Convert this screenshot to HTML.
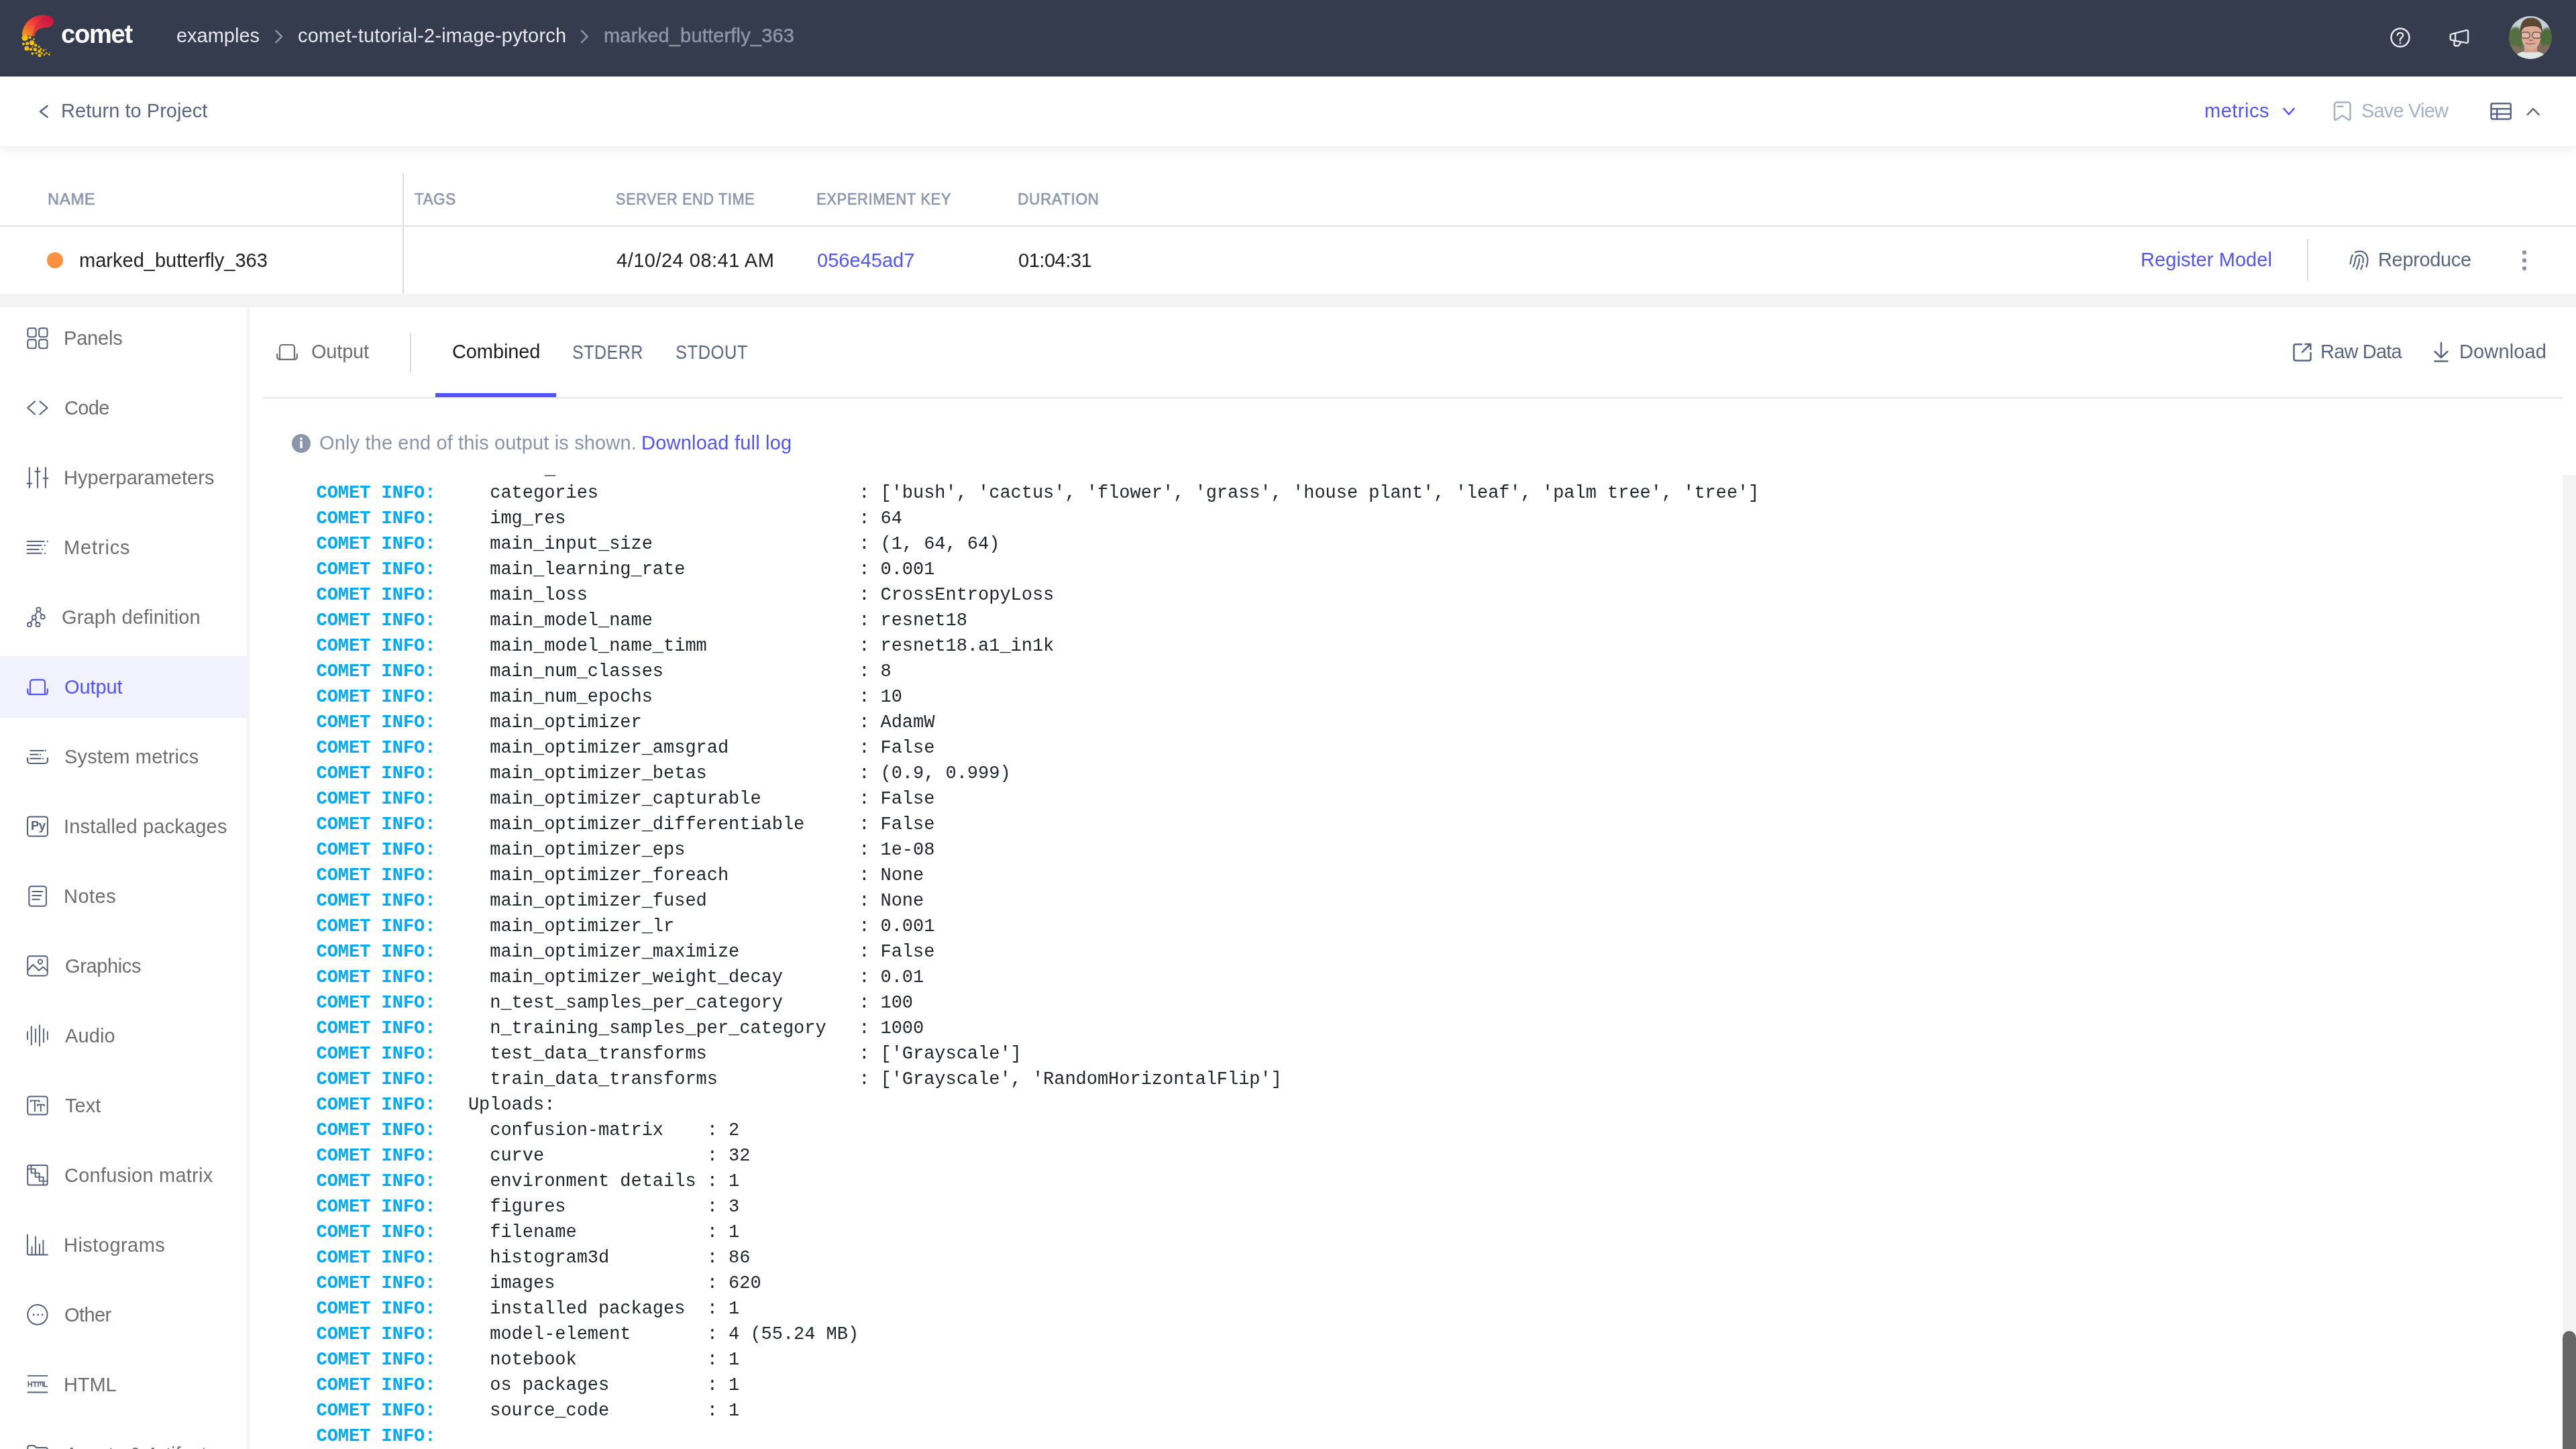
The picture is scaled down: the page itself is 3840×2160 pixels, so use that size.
<!DOCTYPE html><html><head><meta charset="utf-8"><style>*{margin:0;padding:0;box-sizing:border-box}
html,body{width:3840px;height:2160px;overflow:hidden;background:#fff;position:relative;font-family:"Liberation Sans",sans-serif}
.r{position:absolute}
.t{position:absolute;white-space:pre;font-family:"Liberation Sans",sans-serif;will-change:transform}
.log{position:absolute;left:372px;top:707.6px;width:3448px;height:1452.4px;overflow:hidden;background:#fff;will-change:transform}
.ln{position:absolute;left:99.5px;letter-spacing:-0.03px;white-space:pre;font-family:"Liberation Mono",monospace;font-size:27px;line-height:38px;color:#22252d}
.ln b{color:#03a9f4;font-weight:700}
@media (max-width:2600px){html{zoom:0.5}}
</style></head><body>
<div class="r" style="left:0;top:0;width:3840px;height:113px;background:#353c4e"></div>
<div class="r" style="left:0;top:112.5px;width:3840px;height:1.2px;background:#2b3143"></div>
<div class="r" style="left:0;top:114px;width:3840px;height:104px;background:#fff;box-shadow:0 4px 14px rgba(0,0,0,0.07)"></div>
<div class="r" style="left:0;top:438px;width:3840px;height:20px;background:#f3f3f3"></div>
<div class="r" style="left:600px;top:258px;width:2px;height:180px;background:#dcdcdc"></div>
<div class="r" style="left:0;top:336px;width:3840px;height:2px;background:#e2e2e2"></div>
<div class="r" style="left:3439px;top:356px;width:2px;height:63px;background:#d8dbe5"></div>
<div class="r" style="left:368px;top:458px;width:4px;height:1702px;background:#f3f3f3"></div>
<div class="r" style="left:0;top:978px;width:368px;height:92px;background:#f2f2fe"></div>
<div class="r" style="left:611px;top:495.5px;width:2px;height:59px;background:#dcdcdc"></div>
<div class="r" style="left:392px;top:592px;width:3428px;height:2px;background:#e3e3e3"></div>
<div class="r" style="left:648.75px;top:586px;width:180px;height:6px;background:#5155f5"></div>
<div class="log"><div class="ln" style="top:-29.78px"><b>COMET INFO:</b>     batch_size                       : 64</div>
<div class="ln" style="top:8.22px"><b>COMET INFO:</b>     categories                        : ['bush', 'cactus', 'flower', 'grass', 'house plant', 'leaf', 'palm tree', 'tree']</div>
<div class="ln" style="top:46.22px"><b>COMET INFO:</b>     img_res                           : 64</div>
<div class="ln" style="top:84.22px"><b>COMET INFO:</b>     main_input_size                   : (1, 64, 64)</div>
<div class="ln" style="top:122.22px"><b>COMET INFO:</b>     main_learning_rate                : 0.001</div>
<div class="ln" style="top:160.22px"><b>COMET INFO:</b>     main_loss                         : CrossEntropyLoss</div>
<div class="ln" style="top:198.22px"><b>COMET INFO:</b>     main_model_name                   : resnet18</div>
<div class="ln" style="top:236.22px"><b>COMET INFO:</b>     main_model_name_timm              : resnet18.a1_in1k</div>
<div class="ln" style="top:274.22px"><b>COMET INFO:</b>     main_num_classes                  : 8</div>
<div class="ln" style="top:312.22px"><b>COMET INFO:</b>     main_num_epochs                   : 10</div>
<div class="ln" style="top:350.22px"><b>COMET INFO:</b>     main_optimizer                    : AdamW</div>
<div class="ln" style="top:388.22px"><b>COMET INFO:</b>     main_optimizer_amsgrad            : False</div>
<div class="ln" style="top:426.22px"><b>COMET INFO:</b>     main_optimizer_betas              : (0.9, 0.999)</div>
<div class="ln" style="top:464.22px"><b>COMET INFO:</b>     main_optimizer_capturable         : False</div>
<div class="ln" style="top:502.22px"><b>COMET INFO:</b>     main_optimizer_differentiable     : False</div>
<div class="ln" style="top:540.22px"><b>COMET INFO:</b>     main_optimizer_eps                : 1e-08</div>
<div class="ln" style="top:578.22px"><b>COMET INFO:</b>     main_optimizer_foreach            : None</div>
<div class="ln" style="top:616.22px"><b>COMET INFO:</b>     main_optimizer_fused              : None</div>
<div class="ln" style="top:654.22px"><b>COMET INFO:</b>     main_optimizer_lr                 : 0.001</div>
<div class="ln" style="top:692.22px"><b>COMET INFO:</b>     main_optimizer_maximize           : False</div>
<div class="ln" style="top:730.22px"><b>COMET INFO:</b>     main_optimizer_weight_decay       : 0.01</div>
<div class="ln" style="top:768.22px"><b>COMET INFO:</b>     n_test_samples_per_category       : 100</div>
<div class="ln" style="top:806.22px"><b>COMET INFO:</b>     n_training_samples_per_category   : 1000</div>
<div class="ln" style="top:844.22px"><b>COMET INFO:</b>     test_data_transforms              : ['Grayscale']</div>
<div class="ln" style="top:882.22px"><b>COMET INFO:</b>     train_data_transforms             : ['Grayscale', 'RandomHorizontalFlip']</div>
<div class="ln" style="top:920.22px"><b>COMET INFO:</b>   Uploads:</div>
<div class="ln" style="top:958.22px"><b>COMET INFO:</b>     confusion-matrix    : 2</div>
<div class="ln" style="top:996.22px"><b>COMET INFO:</b>     curve               : 32</div>
<div class="ln" style="top:1034.22px"><b>COMET INFO:</b>     environment details : 1</div>
<div class="ln" style="top:1072.22px"><b>COMET INFO:</b>     figures             : 3</div>
<div class="ln" style="top:1110.22px"><b>COMET INFO:</b>     filename            : 1</div>
<div class="ln" style="top:1148.22px"><b>COMET INFO:</b>     histogram3d         : 86</div>
<div class="ln" style="top:1186.22px"><b>COMET INFO:</b>     images              : 620</div>
<div class="ln" style="top:1224.22px"><b>COMET INFO:</b>     installed packages  : 1</div>
<div class="ln" style="top:1262.22px"><b>COMET INFO:</b>     model-element       : 4 (55.24 MB)</div>
<div class="ln" style="top:1300.22px"><b>COMET INFO:</b>     notebook            : 1</div>
<div class="ln" style="top:1338.22px"><b>COMET INFO:</b>     os packages         : 1</div>
<div class="ln" style="top:1376.22px"><b>COMET INFO:</b>     source_code         : 1</div>
<div class="ln" style="top:1414.22px"><b>COMET INFO:</b></div><div class="r" style="left:440px;top:0.4px;width:15.5px;height:1.2px;background:#777"></div></div>
<div class="r" style="left:3820px;top:707.6px;width:20px;height:1452.4px;background:#f3f3f3"></div>
<div class="r" style="left:3820px;top:1984px;width:20px;height:200px;border-radius:10px;background:#666"></div>
<svg width="3840" height="2160" style="position:absolute;left:0;top:0"><defs><linearGradient id="lg" x1="0" y1="1" x2="1" y2="0"><stop offset="0" stop-color="#f6a11f"/><stop offset="0.5" stop-color="#ef3f3d"/><stop offset="1" stop-color="#c40f47"/></linearGradient><linearGradient id="dg" x1="0" y1="0" x2="0" y2="1"><stop offset="0" stop-color="#f0a91f"/><stop offset="1" stop-color="#ffd000"/></linearGradient></defs><path d="M33 52.5 C33.5 36 46 23 63 22.5 C72 22.2 80 25.5 80 31.5 C80 37.5 74.5 41 68.5 41 C58.5 41 51.5 46.5 51.5 54 Z" fill="url(#lg)"/><path d="M71.5 23.2 C76.5 24.5 80 27.5 80 31.5 C80 37.5 74.5 41 68.5 41 C58.5 41 51.5 46.5 51.5 54 L48 53.8 C49 40 58 28 71.5 23.2 Z" fill="#c5143f" opacity="0.45"/><circle cx="37.2" cy="56.3" r="4.7" fill="url(#dg)"/><circle cx="44.6" cy="55.8" r="2.1" fill="url(#dg)"/><circle cx="50.4" cy="58.2" r="1.3" fill="url(#dg)"/><circle cx="35" cy="65.4" r="2.0" fill="url(#dg)"/><circle cx="40.7" cy="64.7" r="2.5" fill="url(#dg)"/><circle cx="47.6" cy="63.7" r="3.7" fill="url(#dg)"/><circle cx="53.1" cy="67.4" r="2.2" fill="url(#dg)"/><circle cx="58.1" cy="69.7" r="1.6" fill="url(#dg)"/><circle cx="39.9" cy="72.1" r="3.5" fill="url(#dg)"/><circle cx="45.9" cy="73.4" r="2.2" fill="url(#dg)"/><circle cx="52.3" cy="73.6" r="2.7" fill="url(#dg)"/><circle cx="48.4" cy="69.9" r="1.1" fill="url(#dg)"/><circle cx="61" cy="73.1" r="1.6" fill="url(#dg)"/><circle cx="65" cy="75.1" r="1.5" fill="url(#dg)"/><circle cx="68.2" cy="73.6" r="0.8" fill="url(#dg)"/><circle cx="58.6" cy="76.4" r="2.4" fill="url(#dg)"/><circle cx="48.4" cy="79.8" r="1.9" fill="url(#dg)"/><circle cx="54.3" cy="79.1" r="1.7" fill="url(#dg)"/><circle cx="62.3" cy="79.1" r="1.7" fill="url(#dg)"/><circle cx="59" cy="82.6" r="2.5" fill="url(#dg)"/><circle cx="66" cy="81.6" r="1.4" fill="url(#dg)"/><circle cx="69.2" cy="79.1" r="1.5" fill="url(#dg)"/><circle cx="73.2" cy="81.3" r="1.4" fill="url(#dg)"/><circle cx="74.4" cy="78.4" r="0.75" fill="url(#dg)"/><defs><clipPath id="av"><circle cx="3772" cy="56" r="32"/></clipPath><filter id="bl" x="-10%" y="-10%" width="120%" height="120%"><feGaussianBlur stdDeviation="1.6"/></filter><filter id="bl2"><feGaussianBlur stdDeviation="0.7"/></filter></defs><g clip-path="url(#av)"><g filter="url(#bl)"><rect x="3736" y="20" width="72" height="72" fill="#7c7262"/><rect x="3736" y="20" width="72" height="26" fill="#c6d0d6"/><ellipse cx="3750" cy="58" rx="13" ry="18" fill="#55703f"/><ellipse cx="3797" cy="57" rx="11" ry="16" fill="#4f6d3a"/><ellipse cx="3748" cy="78" rx="14" ry="10" fill="#7d6f5c"/><ellipse cx="3796" cy="76" rx="12" ry="9" fill="#806a60"/></g><g filter="url(#bl2)"><path d="M3744 92 C3748 80 3758 76 3772 76 C3786 76 3796 80 3800 92 Z" fill="#dde9e2"/><rect x="3763" y="66" width="19" height="12" fill="#d3a08e"/><path d="M3758 46 C3758 36 3764 33 3773 33 C3782 33 3788 37 3788 46 C3788 62 3784 74 3773 74 C3762 74 3758 62 3758 46 Z" fill="#dcab97"/><path d="M3757.5 51 C3755.5 37 3760 27 3772 26.5 C3784 26 3791 34 3789.5 49 C3788.5 45 3787 42 3783 40 C3777 38.5 3766 38.5 3761.5 42 C3759.5 44.5 3758.5 48 3757.5 51 Z" fill="#5a4636"/><rect x="3758.5" y="48" width="12.5" height="9" rx="3.5" fill="#e2b8a8" stroke="#6b5446" stroke-width="1.4"/><rect x="3775" y="48" width="12.5" height="9" rx="3.5" fill="#e2b8a8" stroke="#6b5446" stroke-width="1.4"/><path d="M3770.5 59 C3771.5 61 3774 61 3775.5 59" stroke="#8a5a4a" stroke-width="1.3" fill="none"/><path d="M3765 64.5 Q3772 66.5 3779 64.5" stroke="#a0685a" stroke-width="1.6" fill="none"/></g></g><circle cx="3578" cy="56" r="13.5" fill="none" stroke="#e4e7ee" stroke-width="2.5"/><path d="M3573.8 52.3 C3574.3 50 3575.9 48.9 3578 48.9 C3580.5 48.9 3582.2 50.5 3582.2 52.6 C3582.2 54.6 3580.8 55.5 3579.5 56.5 C3578.3 57.4 3577.8 58.3 3577.8 60.3" fill="none" stroke="#e4e7ee" stroke-width="2.4" stroke-linecap="round" stroke-linejoin="round" /><circle cx="3578" cy="64.2" r="1.4" fill="#e4e7ee"/><path d="M3655.2 50.6 L3676.6 45.1 a2 2 0 0 1 2.5 1.9 V62 a2 2 0 0 1 -2.5 1.9 L3655.2 59.9 a2.5 2.5 0 0 1 -2.5 -2.4 V53 a2.5 2.5 0 0 1 2.5 -2.4 Z" fill="none" stroke="#e4e7ee" stroke-width="2.4" stroke-linecap="round" stroke-linejoin="round" /><path d="M3660.1 50 V60.5" fill="none" stroke="#e4e7ee" stroke-width="2.4" stroke-linecap="round" stroke-linejoin="round" /><path d="M3658.5 60.8 V66 a2.2 2.2 0 0 0 2.2 2.2 H3663.8 a2 2 0 0 0 1.7 -0.9 L3668 63.4" fill="none" stroke="#e4e7ee" stroke-width="2.4" stroke-linecap="round" stroke-linejoin="round" /><path d="M411.5 45.8 L420 54.5 L411.5 63.2" fill="none" stroke="#8a91a5" stroke-width="2.6" stroke-linecap="round" stroke-linejoin="round" /><path d="M867 45.8 L875.5 54.5 L867 63.2" fill="none" stroke="#8a91a5" stroke-width="2.6" stroke-linecap="round" stroke-linejoin="round" /><path d="M70.5 158 L60 166.2 L70.5 174.4" fill="none" stroke="#5a6580" stroke-width="2.6" stroke-linecap="round" stroke-linejoin="round" /><path d="M3404.5 162 L3412 170.5 L3419.5 162" fill="none" stroke="#5155f5" stroke-width="2.6" stroke-linecap="round" stroke-linejoin="round" /><path d="M3480 156 a3.5 3.5 0 0 1 3.5 -3.5 H3500 a3.5 3.5 0 0 1 3.5 3.5 V177.3 a1.5 1.5 0 0 1 -2.4 1.2 L3491.7 172.2 L3482.4 178.5 a1.5 1.5 0 0 1 -2.4 -1.2 Z" fill="none" stroke="#a9b0c3" stroke-width="2.5" stroke-linecap="round" stroke-linejoin="round" /><path d="M3484.5 158.8 H3492.5" fill="none" stroke="#a9b0c3" stroke-width="2.5" stroke-linecap="round" stroke-linejoin="round" /><rect x="3713.5" y="154.3" width="29.3" height="23.3" rx="2.5" fill="none" stroke="#5a6580" stroke-width="2.5"/><path d="M3713.5 162.2 H3742.8 M3713.5 170 H3742.8 M3722.2 162.2 V177.6" fill="none" stroke="#5a6580" stroke-width="2.5" stroke-linecap="round" stroke-linejoin="round" /><path d="M3767.8 170.8 L3776.2 162.2 L3784.6 170.8" fill="none" stroke="#6b6b6b" stroke-width="2.6" stroke-linecap="round" stroke-linejoin="round" /><circle cx="82" cy="388" r="12" fill="#fa923f"/><path d="M3510.9 376 C3513.5 375 3516 374.6 3518.1 374.6 C3524.5 374.6 3529.4 380 3529.4 387.3 C3529.4 391 3528.6 394.5 3527.5 397.5" fill="none" stroke="#5a6580" stroke-width="2.2" stroke-linecap="round" stroke-linejoin="round" /><path d="M3506.8 380.2 C3505.3 383 3504.6 386 3504.3 389.5 C3504.1 391 3503.8 392.2 3503.5 393.1" fill="none" stroke="#5a6580" stroke-width="2.2" stroke-linecap="round" stroke-linejoin="round" /><path d="M3507.9 397.5 C3509.6 394.5 3510.6 391 3511 386.5 C3511.3 383 3513.5 380.7 3517 380.7 C3520.6 380.7 3522.8 383.3 3522.8 386.5 C3522.8 388.5 3522.6 390 3522.5 391.5" fill="none" stroke="#5a6580" stroke-width="2.2" stroke-linecap="round" stroke-linejoin="round" /><path d="M3517.1 386 C3517 389.5 3516.4 392.5 3515.3 395.3 C3514.6 397.2 3513.7 399.2 3512.8 400.9" fill="none" stroke="#5a6580" stroke-width="2.2" stroke-linecap="round" stroke-linejoin="round" /><path d="M3521.7 395.3 L3519.5 401.4" fill="none" stroke="#5a6580" stroke-width="2.2" stroke-linecap="round" stroke-linejoin="round" /><circle cx="3763" cy="376.3" r="3.1" fill="#8a91a5"/><circle cx="3763" cy="388.2" r="3.1" fill="#8a91a5"/><circle cx="3763" cy="400.1" r="3.1" fill="#8a91a5"/><rect x="41.3" y="489.2" width="12.4" height="13" rx="3" fill="none" stroke="#55607c" stroke-width="2"/><rect x="58.2" y="489.2" width="12.4" height="13" rx="3" fill="none" stroke="#55607c" stroke-width="2"/><rect x="41.3" y="506.2" width="12.4" height="13" rx="3" fill="none" stroke="#55607c" stroke-width="2"/><rect x="58.2" y="506.2" width="12.4" height="13" rx="3" fill="none" stroke="#55607c" stroke-width="2"/><path d="M52 598.5 L41.2 608 L52 617.5" fill="none" stroke="#55607c" stroke-width="2.2" stroke-linecap="round" stroke-linejoin="round" /><path d="M59.6 598.5 L70.6 608 L59.6 617.5" fill="none" stroke="#55607c" stroke-width="2.2" stroke-linecap="round" stroke-linejoin="round" /><path d="M43.8 697 V727" fill="none" stroke="#55607c" stroke-width="2" stroke-linecap="round" stroke-linejoin="round" /><path d="M56 697 V727" fill="none" stroke="#55607c" stroke-width="2" stroke-linecap="round" stroke-linejoin="round" /><path d="M68 697 V727" fill="none" stroke="#55607c" stroke-width="2" stroke-linecap="round" stroke-linejoin="round" /><path d="M40.3 720.8 H47.3" fill="none" stroke="#55607c" stroke-width="2" stroke-linecap="round" stroke-linejoin="round" /><path d="M52.5 702.9 H59.5" fill="none" stroke="#55607c" stroke-width="2" stroke-linecap="round" stroke-linejoin="round" /><path d="M64.5 713 H71.5" fill="none" stroke="#55607c" stroke-width="2" stroke-linecap="round" stroke-linejoin="round" /><path d="M40.5 806.9 H65.7" fill="none" stroke="#55607c" stroke-width="2" stroke-linecap="round" stroke-linejoin="round" /><rect x="69.9" y="805.9" width="2" height="2" fill="#55607c"/><path d="M40.5 812.9 H61.8" fill="none" stroke="#55607c" stroke-width="2" stroke-linecap="round" stroke-linejoin="round" /><rect x="65.9" y="811.9" width="2" height="2" fill="#55607c"/><path d="M40.5 818.9 H57.8" fill="none" stroke="#55607c" stroke-width="2" stroke-linecap="round" stroke-linejoin="round" /><rect x="62" y="817.9" width="2" height="2" fill="#55607c"/><path d="M40.5 824.8 H61.8" fill="none" stroke="#55607c" stroke-width="2" stroke-linecap="round" stroke-linejoin="round" /><rect x="65.9" y="823.8" width="2" height="2" fill="#55607c"/><circle cx="57.4" cy="908.7" r="3.1" fill="none" stroke="#55607c" stroke-width="1.8"/><circle cx="63.7" cy="919.5" r="3.1" fill="none" stroke="#55607c" stroke-width="1.8"/><circle cx="50.8" cy="920.4" r="3.1" fill="none" stroke="#55607c" stroke-width="1.8"/><circle cx="44" cy="931.1" r="3.1" fill="none" stroke="#55607c" stroke-width="1.8"/><circle cx="56.5" cy="931.1" r="3.1" fill="none" stroke="#55607c" stroke-width="1.8"/><path d="M58.9 911.4 L62.2 916.8" fill="none" stroke="#55607c" stroke-width="1.8" stroke-linecap="round" stroke-linejoin="round" /><path d="M55.9 911.4 L52.3 917.7" fill="none" stroke="#55607c" stroke-width="1.8" stroke-linecap="round" stroke-linejoin="round" /><path d="M49.3 923.1 L45.5 928.4" fill="none" stroke="#55607c" stroke-width="1.8" stroke-linecap="round" stroke-linejoin="round" /><path d="M52.3 923.1 L55 928.4" fill="none" stroke="#55607c" stroke-width="1.8" stroke-linecap="round" stroke-linejoin="round" /><g transform="translate(40 1012.4)"><path d="M1.2 15 V19.3 a3.5 3.5 0 0 0 3.5 3.5 H27.3 a3.5 3.5 0 0 0 3.5 -3.5 V15" fill="none" stroke="#5155f5" stroke-width="2.2" stroke-linecap="round" stroke-linejoin="round" /><path d="M5 22.5 V5 a4 4 0 0 1 4 -4 H23 a4 4 0 0 1 4 4 V22.5" fill="none" stroke="#5155f5" stroke-width="2.2" stroke-linecap="round" stroke-linejoin="round" /></g><path d="M45.2 1118.9 H65" fill="none" stroke="#55607c" stroke-width="2" stroke-linecap="round" stroke-linejoin="round" /><rect x="67" y="1117.9" width="2" height="2" fill="#55607c"/><path d="M45.2 1124.8 H56.6" fill="none" stroke="#55607c" stroke-width="2" stroke-linecap="round" stroke-linejoin="round" /><rect x="59" y="1123.8" width="2" height="2" fill="#55607c"/><path d="M45.2 1130.8 H60.6" fill="none" stroke="#55607c" stroke-width="2" stroke-linecap="round" stroke-linejoin="round" /><rect x="63" y="1129.8" width="2" height="2" fill="#55607c"/><path d="M41 1130 V1134 a4 4 0 0 0 4 4 H67 a4 4 0 0 0 4 -4 V1130" fill="none" stroke="#55607c" stroke-width="2.2" stroke-linecap="round" stroke-linejoin="round" /><rect x="41" y="1217.4" width="30" height="29" rx="3.5" fill="none" stroke="#55607c" stroke-width="2"/><text x="46" y="1237.3" font-family="Liberation Sans" font-weight="700" font-size="18.5" fill="#55607c" letter-spacing="-0.6">Py</text><rect x="43.3" y="1321.2" width="25.6" height="29.5" rx="3.5" fill="none" stroke="#55607c" stroke-width="2"/><path d="M48.3 1328.9 H63.5" fill="none" stroke="#55607c" stroke-width="2" stroke-linecap="round" stroke-linejoin="round" /><path d="M48.3 1334.9 H61.3" fill="none" stroke="#55607c" stroke-width="2" stroke-linecap="round" stroke-linejoin="round" /><path d="M48.3 1340.8 H58.8" fill="none" stroke="#55607c" stroke-width="2" stroke-linecap="round" stroke-linejoin="round" /><rect x="41.2" y="1425.2" width="29.5" height="29.2" rx="3.5" fill="none" stroke="#55607c" stroke-width="2"/><path d="M41.5 1446.5 L49.1 1438 L58.1 1446.8 L64.1 1441.6 L70.5 1447" fill="none" stroke="#55607c" stroke-width="2" stroke-linecap="round" stroke-linejoin="round" /><circle cx="60" cy="1433.6" r="3.2" fill="none" stroke="#55607c" stroke-width="1.9"/><path d="M40.9 1538.0 V1549.6" fill="none" stroke="#55607c" stroke-width="1.9" stroke-linecap="round" stroke-linejoin="round" /><path d="M46.8 1530.3 V1557.3" fill="none" stroke="#55607c" stroke-width="1.9" stroke-linecap="round" stroke-linejoin="round" /><path d="M53 1534.0 V1553.6" fill="none" stroke="#55607c" stroke-width="1.9" stroke-linecap="round" stroke-linejoin="round" /><path d="M59 1528.3 V1559.3" fill="none" stroke="#55607c" stroke-width="1.9" stroke-linecap="round" stroke-linejoin="round" /><path d="M65 1534.0 V1553.6" fill="none" stroke="#55607c" stroke-width="1.9" stroke-linecap="round" stroke-linejoin="round" /><path d="M70.9 1538.0 V1549.6" fill="none" stroke="#55607c" stroke-width="1.9" stroke-linecap="round" stroke-linejoin="round" /><rect x="41.2" y="1634.4" width="29.5" height="27.2" rx="3.5" fill="none" stroke="#55607c" stroke-width="2"/><path d="M45.6 1642.3 V1640.6 H58.5 V1642.3" fill="none" stroke="#55607c" stroke-width="1.9" stroke-linecap="round" stroke-linejoin="round" /><path d="M51.9 1640.6 V1656.2" fill="none" stroke="#55607c" stroke-width="1.9" stroke-linecap="round" stroke-linejoin="round" /><path d="M56 1648.3 V1646.7 H65.8 V1648.3" fill="none" stroke="#55607c" stroke-width="1.9" stroke-linecap="round" stroke-linejoin="round" /><path d="M60.8 1646.7 V1656.2" fill="none" stroke="#55607c" stroke-width="1.9" stroke-linecap="round" stroke-linejoin="round" /><rect x="41.2" y="1737.1" width="29.5" height="29.4" rx="2.5" fill="none" stroke="#55607c" stroke-width="2"/><path d="M41.2 1742.6 H52.6 V1754.6 H64.6 V1766.5" fill="none" stroke="#55607c" stroke-width="1.9" stroke-linecap="round" stroke-linejoin="round" /><path d="M46.6 1737.1 V1748.6 H58.6 V1760.6 H70.7" fill="none" stroke="#55607c" stroke-width="1.9" stroke-linecap="round" stroke-linejoin="round" /><path d="M40.9 1840.8 V1868.5 a2 2 0 0 0 2 2 H71" fill="none" stroke="#55607c" stroke-width="2" stroke-linecap="round" stroke-linejoin="round" /><path d="M47.6 1858.4 V1870" fill="none" stroke="#55607c" stroke-width="1.9" stroke-linecap="round" stroke-linejoin="round" /><path d="M53 1843.4 V1870" fill="none" stroke="#55607c" stroke-width="1.9" stroke-linecap="round" stroke-linejoin="round" /><path d="M59 1854.8 V1870" fill="none" stroke="#55607c" stroke-width="1.9" stroke-linecap="round" stroke-linejoin="round" /><path d="M64.4 1849 V1870" fill="none" stroke="#55607c" stroke-width="1.9" stroke-linecap="round" stroke-linejoin="round" /><circle cx="55.9" cy="1959.8" r="14.7" fill="none" stroke="#55607c" stroke-width="2"/><circle cx="50.2" cy="1960" r="1.4" fill="#55607c"/><circle cx="56.6" cy="1960" r="1.4" fill="#55607c"/><circle cx="63.2" cy="1960" r="1.4" fill="#55607c"/><path d="M41.6 2050.9 H70.6" fill="none" stroke="#55607c" stroke-width="1.9" stroke-linecap="round" stroke-linejoin="round" /><path d="M41.6 2075.5 H70.6" fill="none" stroke="#55607c" stroke-width="1.9" stroke-linecap="round" stroke-linejoin="round" /><path d="M42.3 2059.8 V2067 M42.3 2063.4 H47.3 M47.3 2059.8 V2067" fill="none" stroke="#55607c" stroke-width="1.6" stroke-linecap="round" stroke-linejoin="round" /><path d="M49.2 2060.4 H55.2 M52.2 2060.4 V2067" fill="none" stroke="#55607c" stroke-width="1.6" stroke-linecap="round" stroke-linejoin="round" /><path d="M57 2067 V2060.4 H64 V2067 M60.5 2060.4 V2065" fill="none" stroke="#55607c" stroke-width="1.6" stroke-linecap="round" stroke-linejoin="round" /><path d="M66 2059.8 V2066.8 H70.5" fill="none" stroke="#55607c" stroke-width="1.6" stroke-linecap="round" stroke-linejoin="round" /><path d="M41.2 2162 V2158 a3 3 0 0 1 3 -3 H51 L54 2158 H68 a3 3 0 0 1 3 3 V2162" fill="none" stroke="#55607c" stroke-width="2" stroke-linecap="round" stroke-linejoin="round" /><g transform="translate(412 513)"><path d="M1.2 15 V19.3 a3.5 3.5 0 0 0 3.5 3.5 H27.3 a3.5 3.5 0 0 0 3.5 -3.5 V15" fill="none" stroke="#6e6e6e" stroke-width="2.2" stroke-linecap="round" stroke-linejoin="round" /><path d="M5 22.5 V5 a4 4 0 0 1 4 -4 H23 a4 4 0 0 1 4 4 V22.5" fill="none" stroke="#6e6e6e" stroke-width="2.2" stroke-linecap="round" stroke-linejoin="round" /></g><path d="M3431 513.2 H3422 a2.5 2.5 0 0 0 -2.5 2.5 V535 a2.5 2.5 0 0 0 2.5 2.5 H3442 a2.5 2.5 0 0 0 2.5 -2.5 V526" fill="none" stroke="#5a6580" stroke-width="2.5" stroke-linecap="round" stroke-linejoin="round" /><path d="M3432 524.8 L3443.5 513.5 M3436.5 513 H3444.3 V520.8" fill="none" stroke="#5a6580" stroke-width="2.5" stroke-linecap="round" stroke-linejoin="round" /><path d="M3639 511 V533 M3629.6 524 L3639 533.2 L3648.4 524 M3629.5 538.5 H3648.5" fill="none" stroke="#5a6580" stroke-width="2.5" stroke-linecap="round" stroke-linejoin="round" /><circle cx="449" cy="661" r="14" fill="#8c95aa"/><circle cx="449" cy="654" r="1.9" fill="#fff"/><rect x="447.3" y="657.5" width="3.4" height="10.5" rx="0.6" fill="#fff"/></svg>
<div class="t" style="left:91.00px;top:32.33px;font-size:38px;line-height:38px;color:#ffffff;font-weight:700;letter-spacing:-1.192px;">comet</div>
<div class="t" style="left:262.80px;top:39.05px;font-size:29px;line-height:29px;color:#e4e7ee;font-weight:400;letter-spacing:-0.016px;">examples</div>
<div class="t" style="left:443.60px;top:39.05px;font-size:29px;line-height:29px;color:#e4e7ee;font-weight:400;letter-spacing:0.178px;">comet-tutorial-2-image-pytorch</div>
<div class="t" style="left:900.25px;top:39.05px;font-size:29px;line-height:29px;color:#8e95a8;font-weight:400;letter-spacing:0.178px;-webkit-text-stroke:0.5px #8e95a8;">marked_butterfly_363</div>
<div class="t" style="left:90.50px;top:151.15px;font-size:29px;line-height:29px;color:#5a6580;font-weight:400;letter-spacing:0.044px;">Return to Project</div>
<div class="t" style="left:3286.25px;top:150.65px;font-size:29px;line-height:29px;color:#5155f5;font-weight:400;letter-spacing:0.510px;">metrics</div>
<div class="t" style="left:3519.50px;top:150.65px;font-size:29px;line-height:29px;color:#a9b0c3;font-weight:400;letter-spacing:-0.818px;">Save View</div>
<div class="t" style="left:70.57px;top:284.96px;font-size:24.5px;line-height:24.5px;color:#8c96aa;font-weight:400;letter-spacing:0.800px;transform:scaleX(0.9669);transform-origin:0 0;-webkit-text-stroke:0.7px #8c96aa;">NAME</div>
<div class="t" style="left:618.00px;top:284.96px;font-size:24.5px;line-height:24.5px;color:#8c96aa;font-weight:400;letter-spacing:0.800px;transform:scaleX(0.9075);transform-origin:0 0;-webkit-text-stroke:0.7px #8c96aa;">TAGS</div>
<div class="t" style="left:917.87px;top:284.96px;font-size:24.5px;line-height:24.5px;color:#8c96aa;font-weight:400;letter-spacing:0.800px;transform:scaleX(0.8792);transform-origin:0 0;-webkit-text-stroke:0.7px #8c96aa;">SERVER END TIME</div>
<div class="t" style="left:1216.97px;top:284.96px;font-size:24.5px;line-height:24.5px;color:#8c96aa;font-weight:400;letter-spacing:0.800px;transform:scaleX(0.8906);transform-origin:0 0;-webkit-text-stroke:0.7px #8c96aa;">EXPERIMENT KEY</div>
<div class="t" style="left:1516.91px;top:284.96px;font-size:24.5px;line-height:24.5px;color:#8c96aa;font-weight:400;letter-spacing:0.800px;transform:scaleX(0.9177);transform-origin:0 0;-webkit-text-stroke:0.7px #8c96aa;">DURATION</div>
<div class="t" style="left:117.75px;top:373.65px;font-size:29px;line-height:29px;color:#222222;font-weight:400;letter-spacing:0.020px;">marked_butterfly_363</div>
<div class="t" style="left:918.75px;top:373.65px;font-size:29px;line-height:29px;color:#222222;font-weight:400;letter-spacing:0.498px;">4/10/24 08:41 AM</div>
<div class="t" style="left:1217.75px;top:373.65px;font-size:29px;line-height:29px;color:#5155f5;font-weight:400;letter-spacing:0.028px;">056e45ad7</div>
<div class="t" style="left:1517.75px;top:373.65px;font-size:29px;line-height:29px;color:#222222;font-weight:400;letter-spacing:-0.465px;">01:04:31</div>
<div class="t" style="left:3191.25px;top:373.15px;font-size:29px;line-height:29px;color:#5155f5;font-weight:400;letter-spacing:0.070px;">Register Model</div>
<div class="t" style="left:3544.50px;top:373.15px;font-size:29px;line-height:29px;color:#5a6580;font-weight:400;letter-spacing:-0.343px;">Reproduce</div>
<div class="t" style="left:94.80px;top:489.75px;font-size:29px;line-height:29px;color:#6e6e6e;font-weight:400;letter-spacing:-0.194px;">Panels</div>
<div class="t" style="left:95.80px;top:593.75px;font-size:29px;line-height:29px;color:#6e6e6e;font-weight:400;letter-spacing:-0.667px;">Code</div>
<div class="t" style="left:94.80px;top:697.75px;font-size:29px;line-height:29px;color:#6e6e6e;font-weight:400;letter-spacing:0.027px;">Hyperparameters</div>
<div class="t" style="left:94.80px;top:801.75px;font-size:29px;line-height:29px;color:#6e6e6e;font-weight:400;letter-spacing:0.860px;">Metrics</div>
<div class="t" style="left:92.40px;top:905.75px;font-size:29px;line-height:29px;color:#6e6e6e;font-weight:400;letter-spacing:0.126px;">Graph definition</div>
<div class="t" style="left:95.80px;top:1009.75px;font-size:29px;line-height:29px;color:#5155f5;font-weight:400;letter-spacing:-0.120px;">Output</div>
<div class="t" style="left:95.80px;top:1113.75px;font-size:29px;line-height:29px;color:#6e6e6e;font-weight:400;letter-spacing:0.155px;">System metrics</div>
<div class="t" style="left:94.80px;top:1217.75px;font-size:29px;line-height:29px;color:#6e6e6e;font-weight:400;letter-spacing:0.187px;">Installed packages</div>
<div class="t" style="left:94.80px;top:1321.75px;font-size:29px;line-height:29px;color:#6e6e6e;font-weight:400;letter-spacing:0.486px;">Notes</div>
<div class="t" style="left:96.50px;top:1425.75px;font-size:29px;line-height:29px;color:#6e6e6e;font-weight:400;letter-spacing:-0.363px;">Graphics</div>
<div class="t" style="left:96.80px;top:1529.75px;font-size:29px;line-height:29px;color:#6e6e6e;font-weight:400;letter-spacing:0.114px;">Audio</div>
<div class="t" style="left:96.80px;top:1633.75px;font-size:29px;line-height:29px;color:#6e6e6e;font-weight:400;letter-spacing:0.057px;">Text</div>
<div class="t" style="left:95.80px;top:1737.75px;font-size:29px;line-height:29px;color:#6e6e6e;font-weight:400;letter-spacing:0.241px;">Confusion matrix</div>
<div class="t" style="left:94.80px;top:1841.75px;font-size:29px;line-height:29px;color:#6e6e6e;font-weight:400;letter-spacing:0.462px;">Histograms</div>
<div class="t" style="left:95.80px;top:1945.75px;font-size:29px;line-height:29px;color:#6e6e6e;font-weight:400;letter-spacing:-0.618px;">Other</div>
<div class="t" style="left:94.80px;top:2049.75px;font-size:29px;line-height:29px;color:#6e6e6e;font-weight:400;letter-spacing:-0.105px;">HTML</div>
<div class="t" style="left:96.80px;top:2153.75px;font-size:29px;line-height:29px;color:#6e6e6e;font-weight:400;letter-spacing:0.000px;">Assets &amp; Artifacts</div>
<div class="t" style="left:464.00px;top:510.40px;font-size:29px;line-height:29px;color:#6e6e6e;font-weight:400;letter-spacing:-0.200px;">Output</div>
<div class="t" style="left:673.50px;top:510.40px;font-size:29px;line-height:29px;color:#1c1c1c;font-weight:400;letter-spacing:-0.115px;">Combined</div>
<div class="t" style="left:852.89px;top:510.65px;font-size:29px;line-height:29px;color:#5a6580;font-weight:400;letter-spacing:0.600px;transform:scaleX(0.8625);transform-origin:0 0;">STDERR</div>
<div class="t" style="left:1006.92px;top:511.15px;font-size:29px;line-height:29px;color:#5a6580;font-weight:400;letter-spacing:0.600px;transform:scaleX(0.8790);transform-origin:0 0;">STDOUT</div>
<div class="t" style="left:3459.00px;top:510.40px;font-size:29px;line-height:29px;color:#5a6580;font-weight:400;letter-spacing:-0.814px;">Raw Data</div>
<div class="t" style="left:3666.00px;top:510.40px;font-size:29px;line-height:29px;color:#5a6580;font-weight:400;letter-spacing:0.130px;">Download</div>
<div class="t" style="left:475.50px;top:646.15px;font-size:29px;line-height:29px;color:#8a93a8;font-weight:400;letter-spacing:0.146px;">Only the end of this output is shown.</div>
<div class="t" style="left:956.40px;top:646.15px;font-size:29px;line-height:29px;color:#5155f5;font-weight:400;letter-spacing:0.211px;">Download full log</div>
</body></html>
